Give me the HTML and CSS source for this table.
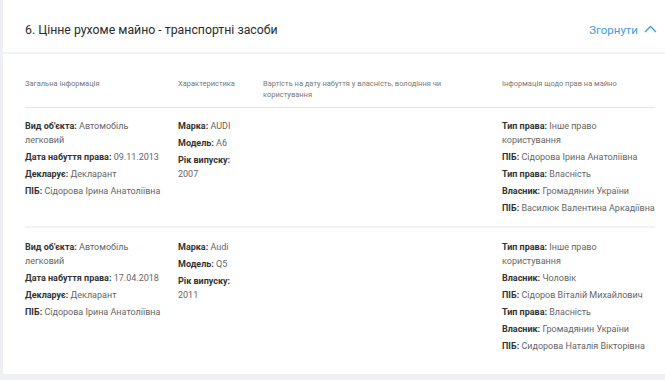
FILE: index.html
```html
<!DOCTYPE html>
<html lang="uk">
<head>
<meta charset="utf-8">
<link rel="stylesheet" href="styles.css">
</head>
<body>
<section class="card">
  <header class="card-head">
    <h2 class="title">6. Цінне рухоме майно - транспортні засоби</h2>
    <a class="toggle" href="#">Згорнути
      <svg class="chev" width="13" height="8" viewBox="0 0 13 8"><path d="M1 7 L6.5 1.5 L12 7" fill="none" stroke="currentColor" stroke-width="1.3"/></svg>
    </a>
  </header>
  <div class="table">
    <div class="row head">
      <div class="c c1">Загальна інформація</div>
      <div class="c c2">Характеристика</div>
      <div class="c c3"><span class="th3">Вартість на дату набуття у власність, володіння чи користування</span></div>
      <div class="c c4">Інформація щодо прав на майно</div>
    </div>
    <div class="row">
      <div class="c c1">
        <p><b>Вид об'єкта:</b> <span>Автомобіль</span><br><span>легковий</span></p>
        <p><b>Дата набуття права:</b> 09.11.2013</p>
        <p><b>Декларує:</b> Декларант</p>
        <p><b>ПІБ:</b> Сідорова Ірина Анатоліївна</p>
      </div>
      <div class="c c2">
        <p><b>Марка:</b> AUDI</p>
        <p><b>Модель:</b> A6</p>
        <p><b>Рік випуску:</b><br>2007</p>
      </div>
      <div class="c c3"></div>
      <div class="c c4">
        <p><b>Тип права:</b> <span>Інше право</span><br><span>користування</span></p>
        <p><b>ПІБ:</b> Сідорова Ірина Анатоліївна</p>
        <p><b>Тип права:</b> Власність</p>
        <p><b>Власник:</b> Громадянин України</p>
        <p><b>ПІБ:</b> Василюк Валентина Аркадіївна</p>
      </div>
    </div>
    <div class="row">
      <div class="c c1">
        <p><b>Вид об'єкта:</b> <span>Автомобіль</span><br><span>легковий</span></p>
        <p><b>Дата набуття права:</b> 17.04.2018</p>
        <p><b>Декларує:</b> Декларант</p>
        <p><b>ПІБ:</b> Сідорова Ірина Анатоліївна</p>
      </div>
      <div class="c c2">
        <p><b>Марка:</b> Audi</p>
        <p><b>Модель:</b> Q5</p>
        <p><b>Рік випуску:</b><br>2011</p>
      </div>
      <div class="c c3"></div>
      <div class="c c4">
        <p><b>Тип права:</b> <span>Інше право</span><br><span>користування</span></p>
        <p><b>Власник:</b> Чоловік</p>
        <p><b>ПІБ:</b> Сідоров Віталій Михайлович</p>
        <p><b>Тип права:</b> Власність</p>
        <p><b>Власник:</b> Громадянин України</p>
        <p><b>ПІБ:</b> Сидорова Наталія Вікторівна</p>
      </div>
    </div>
  </div>
</section>
</body>
</html>
```
FILE: styles.css
```css
html, body {
  margin: 0;
  padding: 0;
  background: #eef0f5;
  font-family: Roboto, "Noto Sans", sans-serif;
}
.card {
  margin-left: 3px;
  width: 662px;
  height: 374px;
  box-sizing: border-box;
  background: #fff;
}
.card-head {
  height: 54px;
  box-sizing: border-box;
  border-bottom: 2px solid #f1f2f5;
  display: flex;
  align-items: center;
  justify-content: space-between;
  padding: 7px 8px 0 22px;
}
.title {
  margin: 0;
  font-size: 12.3px;
  font-weight: 400;
  color: #2b2b2b;
}
.toggle {
  display: flex;
  align-items: center;
  gap: 6px;
  font-size: 11.5px;
  color: #3d9be0;
  text-decoration: none;
}
.chev { margin-top: -2px; }
.table {
  padding: 0 10px 0 22px;
}
.row {
  display: grid;
  grid-template-columns: 153px 85px 239px 1fr;
  padding: 11px 0 8px;
  border-bottom: 2px solid #f1f2f5;
}
.row + .row:last-child { padding-top: 12px; border-bottom: none; }
.row.head {
  padding: 24px 0 7px;
  border-bottom: 1px solid #e3e3e3;
  font-size: 7.5px;
  line-height: 11px;
  color: #777;
}
.th3 { display: block; max-width: 190px; }
.c1 { padding-right: 14px; }
.c2 { padding-right: 14px; }
.c p {
  margin: 0 0 3px;
  font-size: 9px;
  line-height: 14px;
  color: #666;
}
.c p b {
  font-weight: 700;
  color: #333;
}
```
